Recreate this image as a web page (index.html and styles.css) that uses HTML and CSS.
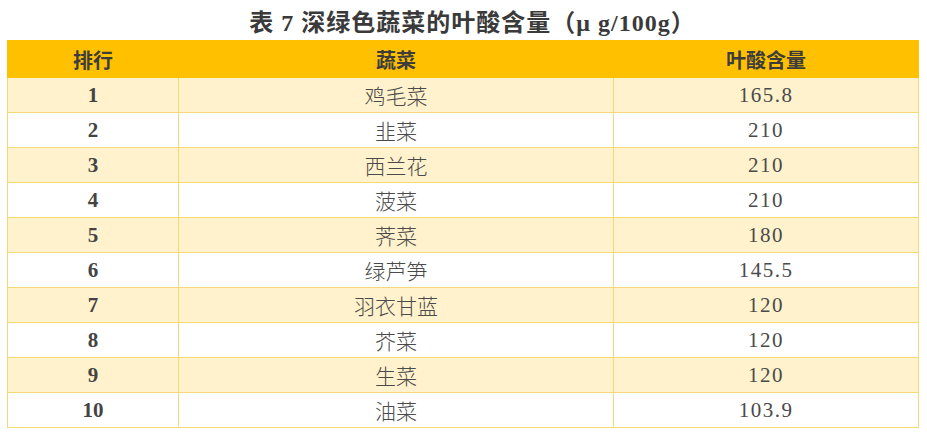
FILE: index.html
```html
<!DOCTYPE html>
<html lang="zh">
<head>
<meta charset="utf-8">
<link rel="stylesheet" href="styles.css">
</head>
<body>
<div class="wrap">
  <h1 class="title">表 7 深绿色蔬菜的叶酸含量（μ g/100g）</h1>
  <table class="tbl">
    <colgroup><col class="c1"><col class="c2"><col class="c3"></colgroup>
    <thead>
      <tr><th>排行</th><th>蔬菜</th><th>叶酸含量</th></tr>
    </thead>
    <tbody>
      <tr class="alt"><td class="rank">1</td><td>鸡毛菜</td><td class="num">165.8</td></tr>
      <tr><td class="rank">2</td><td>韭菜</td><td class="num">210</td></tr>
      <tr class="alt"><td class="rank">3</td><td>西兰花</td><td class="num">210</td></tr>
      <tr><td class="rank">4</td><td>菠菜</td><td class="num">210</td></tr>
      <tr class="alt"><td class="rank">5</td><td>荠菜</td><td class="num">180</td></tr>
      <tr><td class="rank">6</td><td>绿芦笋</td><td class="num">145.5</td></tr>
      <tr class="alt"><td class="rank">7</td><td>羽衣甘蓝</td><td class="num">120</td></tr>
      <tr><td class="rank">8</td><td>芥菜</td><td class="num">120</td></tr>
      <tr class="alt"><td class="rank">9</td><td>生菜</td><td class="num">120</td></tr>
      <tr><td class="rank">10</td><td>油菜</td><td class="num">103.9</td></tr>
    </tbody>
  </table>
</div>
</body>
</html>
```

FILE: styles.css
```css
html, body {
  margin: 0;
  padding: 0;
  background: #ffffff;
}
.wrap {
  padding: 8px 9px 0 7px;
}
.title {
  margin: 0;
  height: 32px;
  line-height: 30px;
  text-align: center;
  font-family: "Liberation Serif", "Noto Sans CJK SC", serif;
  font-size: 24px;
  font-weight: 700;
  color: #3a3a3a;
  padding-left: 20px;
  letter-spacing: 1px;
}
.tbl {
  width: 911px;
  border-collapse: collapse;
  table-layout: fixed;
  font-family: "Noto Sans CJK SC", sans-serif;
}
.c1 { width: 171px; }
.c2 { width: 435px; }
.c3 { width: 305px; }
.tbl th {
  background: #ffc000;
  height: 36px;
  padding: 0;
  font-size: 20px;
  font-weight: 700;
  color: #3c3c3c;
  text-align: center;
  border: 1px solid #ffc000;
}
.tbl td {
  height: 34px;
  padding: 0;
  border: 1px solid #f5d978;
  text-align: center;
  font-size: 21px;
  font-weight: 300;
  color: #4a4a4a;
}
.tbl tr.alt td {
  background: #fff2cc;
}
.tbl td.rank {
  font-family: "Liberation Serif", serif;
  font-weight: 700;
  font-size: 21px;
  color: #444444;
}
.tbl td.num {
  font-family: "Liberation Serif", serif;
  font-weight: 400;
  font-size: 21px;
  letter-spacing: 1.5px;
  color: #4a4a4a;
}
```
